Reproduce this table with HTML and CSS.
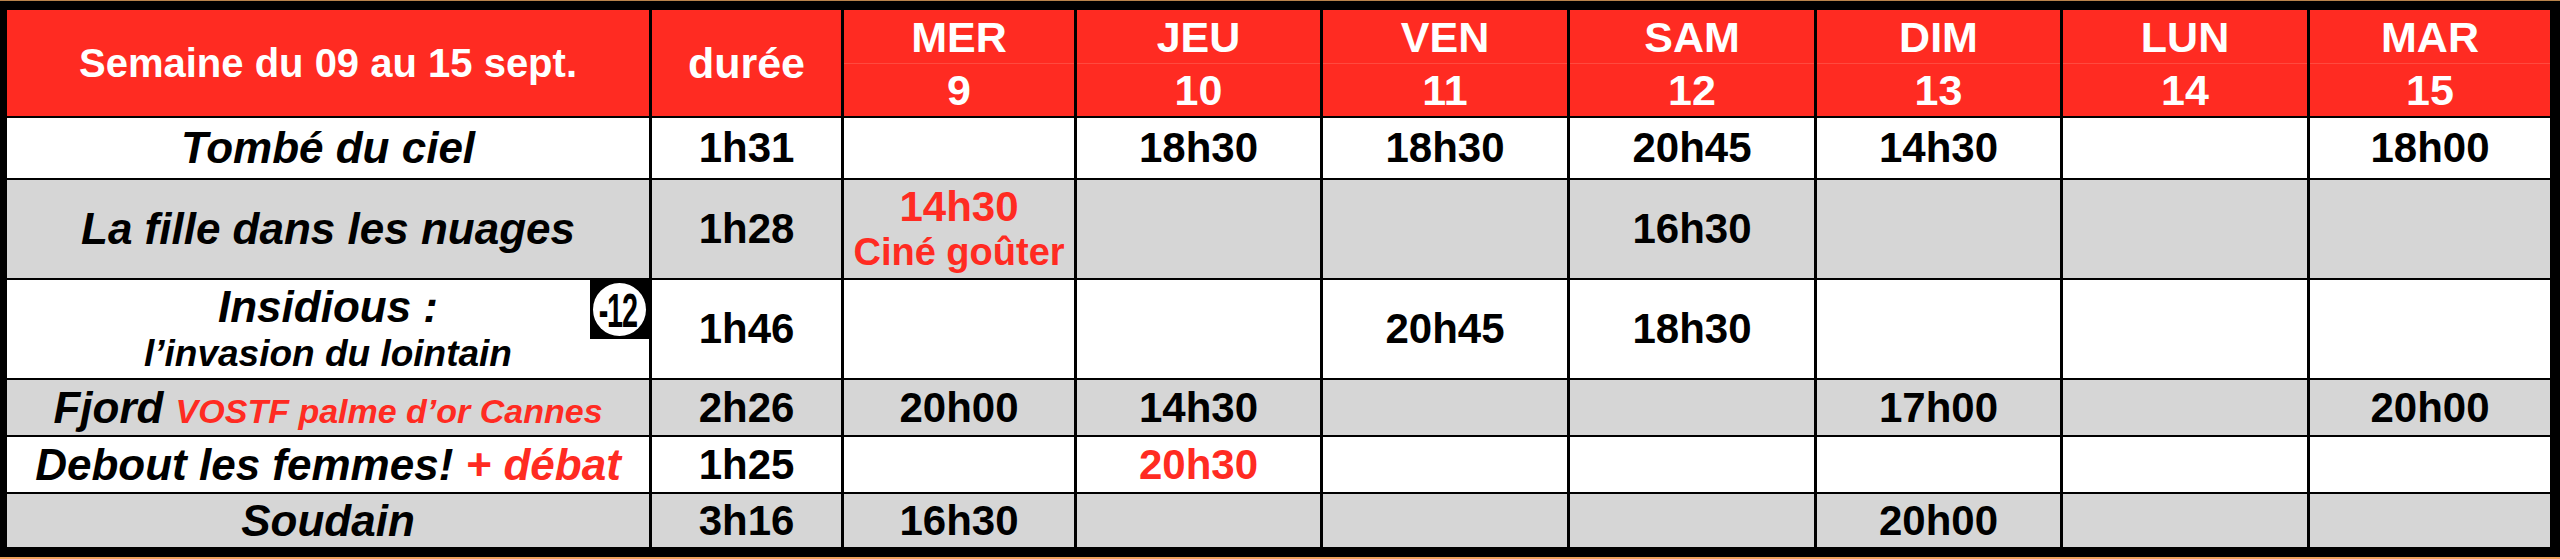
FILE: index.html
```html
<!DOCTYPE html>
<html lang="fr">
<head>
<meta charset="utf-8">
<title>Programme de la semaine</title>
<link rel="stylesheet" href="styles.css">
</head>
<body>
<div class="frame">
  <div class="grid">
    <div class="hcell week">Semaine du 09 au 15 sept.</div>
    <div class="hcell dur">durée</div>
    <div class="hcell day"><span class="dn">MER</span><span class="dd">9</span></div>
    <div class="hcell day"><span class="dn">JEU</span><span class="dd">10</span></div>
    <div class="hcell day"><span class="dn">VEN</span><span class="dd">11</span></div>
    <div class="hcell day"><span class="dn">SAM</span><span class="dd">12</span></div>
    <div class="hcell day"><span class="dn">DIM</span><span class="dd">13</span></div>
    <div class="hcell day"><span class="dn">LUN</span><span class="dd">14</span></div>
    <div class="hcell day"><span class="dn">MAR</span><span class="dd">15</span></div>

    <div class="row white">
      <div class="cell title">Tombé du ciel</div>
      <div class="cell">1h31</div>
      <div class="cell"></div>
      <div class="cell">18h30</div>
      <div class="cell">18h30</div>
      <div class="cell">20h45</div>
      <div class="cell">14h30</div>
      <div class="cell"></div>
      <div class="cell">18h00</div>
    </div>

    <div class="row gray">
      <div class="cell title">La fille dans les nuages</div>
      <div class="cell">1h28</div>
      <div class="cell red stack"><span class="st1">14h30</span><span class="st2">Ciné goûter</span></div>
      <div class="cell"></div>
      <div class="cell"></div>
      <div class="cell">16h30</div>
      <div class="cell"></div>
      <div class="cell"></div>
      <div class="cell"></div>
    </div>

    <div class="row white">
      <div class="cell title rated">
        <div class="tstack"><span class="t1">Insidious :</span><span class="t2">l’invasion du lointain</span></div>
        <div class="badge"><div class="circ"><span class="num">-12</span></div></div>
      </div>
      <div class="cell">1h46</div>
      <div class="cell"></div>
      <div class="cell"></div>
      <div class="cell">20h45</div>
      <div class="cell">18h30</div>
      <div class="cell"></div>
      <div class="cell"></div>
      <div class="cell"></div>
    </div>

    <div class="row gray">
      <div class="cell title"><span>Fjord <span class="red note">VOSTF palme d’or Cannes</span></span></div>
      <div class="cell">2h26</div>
      <div class="cell">20h00</div>
      <div class="cell">14h30</div>
      <div class="cell"></div>
      <div class="cell"></div>
      <div class="cell">17h00</div>
      <div class="cell"></div>
      <div class="cell">20h00</div>
    </div>

    <div class="row white">
      <div class="cell title"><span>Debout les femmes! <span class="red">+ débat</span></span></div>
      <div class="cell">1h25</div>
      <div class="cell"></div>
      <div class="cell red">20h30</div>
      <div class="cell"></div>
      <div class="cell"></div>
      <div class="cell"></div>
      <div class="cell"></div>
      <div class="cell"></div>
    </div>

    <div class="row gray">
      <div class="cell title">Soudain</div>
      <div class="cell">3h16</div>
      <div class="cell">16h30</div>
      <div class="cell"></div>
      <div class="cell"></div>
      <div class="cell"></div>
      <div class="cell">20h00</div>
      <div class="cell"></div>
      <div class="cell"></div>
    </div>
  </div>
</div>
</body>
</html>
```

FILE: styles.css
```css
html, body {
  margin: 0;
  padding: 0;
  background: #000;
}

.frame {
  background: #000;
  border-top: 1px solid #b9834b;
  border-bottom: 2px solid #eea35c;
  padding: 9px 10px 10px 7px;
  width: 2543px;
  height: 537px;
}

.grid {
  display: grid;
  grid-template-columns: 642px 189px 230px 243px 244px 244px 243px 244px 240px;
  grid-template-rows: 106px 60px 98px 98px 55px 55px 53px;
  column-gap: 3px;
  row-gap: 2px;
  background: #000;
  font-family: "Liberation Sans", Arial, Helvetica, sans-serif;
  font-weight: bold;
}

.hcell {
  background: #ff2b22;
  color: #fff;
  display: flex;
  align-items: center;
  justify-content: center;
  font-size: 43px;
  line-height: 1;
}

.week {
  font-size: 40px;
}

.day {
  flex-direction: column;
  align-items: stretch;
}

.day .dn,
.day .dd {
  flex: 1;
  display: flex;
  align-items: center;
  justify-content: center;
}

.day .dn {
  border-bottom: 1px solid #ff4a3f;
  padding-top: 2px;
}

.day .dd {
  padding-top: 1px;
}

.row {
  display: contents;
}

.row.white > .cell {
  background: #fff;
}

.row.gray > .cell {
  background: #d6d6d6;
}

.cell {
  display: flex;
  align-items: center;
  justify-content: center;
  text-align: center;
  color: #000;
  font-size: 42px;
  white-space: nowrap;
}

.title {
  font-style: italic;
  font-size: 44px;
}

.red {
  color: #ff2b22;
}

.note {
  font-size: 34px;
}

.stack {
  flex-direction: column;
  line-height: 1.15;
}

.st1 {
  font-size: 42px;
}

.st2 {
  font-size: 38px;
}

.rated {
  position: relative;
}

.tstack {
  display: flex;
  flex-direction: column;
  align-items: center;
  line-height: 1.1;
}

.t1 {
  font-size: 44px;
}

.t2 {
  font-size: 37px;
  margin-top: 3px;
}

.badge {
  position: absolute;
  top: 0;
  right: 0;
  width: 59px;
  height: 59px;
  background: #000;
  display: flex;
  align-items: center;
  justify-content: center;
}

.circ {
  width: 53px;
  height: 53px;
  border-radius: 50%;
  background: #fff;
  display: flex;
  align-items: center;
  justify-content: center;
  overflow: hidden;
}

.num {
  font-style: normal;
  font-size: 48px;
  line-height: 1;
  color: #000;
  letter-spacing: -2px;
  transform: scaleX(0.6);
  margin-left: -3px;
  padding-top: 2px;
}
```
